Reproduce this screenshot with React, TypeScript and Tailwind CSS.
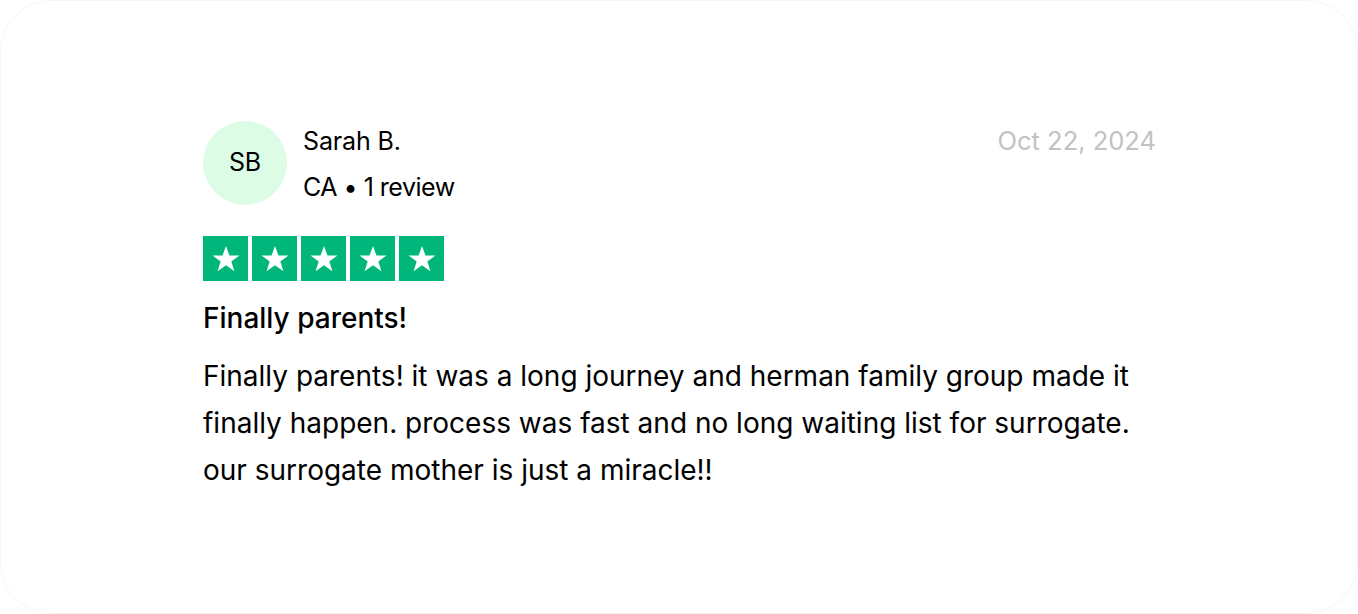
import React from "react"

const font = { fontFamily: "Inter, 'Noto Sans', sans-serif" }

function Star() {
  return (
    <div className="flex h-[45px] w-[45px] items-center justify-center bg-[#00b67a]">
      <svg width="32" height="32" viewBox="0 0 24 24" fill="#ffffff">
        <path d="M12 2.2l2.6 7.1h7.5l-6.1 4.5 2.3 7.3L12 16.6l-6.3 4.5 2.3-7.3-6.1-4.5h7.5z" />
      </svg>
    </div>
  )
}

export default function App() {
  return (
    <div className="h-[614px] w-[1358px] bg-white" style={font}>
      <div className="h-full w-full rounded-[52px] border border-dotted border-[#ededed] bg-white pl-[202px] pr-[201px] pt-[120px]">
        <div className="flex items-start justify-between">
          <div className="flex items-start gap-4">
            <div className="flex h-[84px] w-[84px] items-center justify-center rounded-full bg-[#dcfce5] text-[25px] font-normal tracking-[-0.01em] text-black">
              SB
            </div>
            <div className="flex flex-col pt-[2px]">
              <span className="text-[25px] leading-[36px] tracking-[-0.005em] text-black">Sarah B.</span>
              <span className="mt-[10px] text-[25px] leading-[36px] tracking-[-0.02em] text-black">CA • 1 review</span>
            </div>
          </div>
          <span className="pt-[2px] text-[25.5px] leading-[36px] tracking-[0em] text-[#c2c2c2]">Oct 22, 2024</span>
        </div>
        <div className="mt-[31px] flex gap-[4px]">
          <Star />
          <Star />
          <Star />
          <Star />
          <Star />
        </div>
        <h2 className="mt-[17px] text-[28px] font-medium leading-[40px] text-black">Finally parents!</h2>
        <p className="mt-[15px] max-w-[945px] text-[28px] leading-[47px] text-black">
          Finally parents! it was a long journey and herman family group made it finally happen. process was fast and no long waiting list for surrogate. our surrogate mother is just a miracle!!
        </p>
      </div>
    </div>
  )
}
